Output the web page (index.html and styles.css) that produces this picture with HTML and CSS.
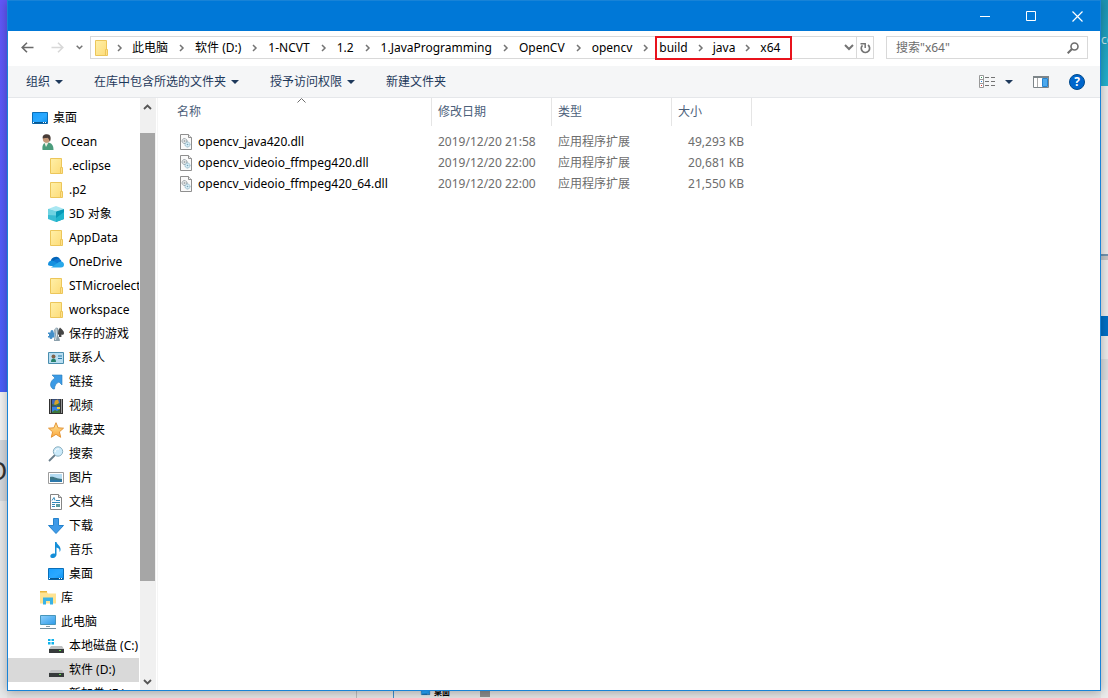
FILE: index.html
```
<!DOCTYPE html>
<html lang="zh-CN">
<head>
<meta charset="utf-8">
<title>x64</title>
<link rel="stylesheet" href="styles.css">
</head>
<body>
<svg class="defs" aria-hidden="true">
  <linearGradient id="g-folder" x1="0" y1="0" x2="1" y2="1"><stop offset="0" stop-color="#fff0a8"/><stop offset="1" stop-color="#fddc79"/></linearGradient>
  <linearGradient id="g-screen" x1="0" y1="0" x2="1" y2="1"><stop offset="0" stop-color="#1aa0ff"/><stop offset=".55" stop-color="#2ba9ff"/><stop offset="1" stop-color="#0a90f0"/></linearGradient>
  <linearGradient id="g-pc" x1="0" y1="0" x2="1" y2="1"><stop offset="0" stop-color="#8fd0fb"/><stop offset="1" stop-color="#2d9bea"/></linearGradient>
  <linearGradient id="g-star" x1="0" y1="0" x2="0" y2="1"><stop offset="0" stop-color="#ffe79a"/><stop offset="1" stop-color="#fba63c"/></linearGradient>
  <symbol id="i-folder" viewBox="0 0 16 16"><path d="M2.5.5h11v15h-11z" fill="url(#g-folder)" stroke="#ecc65a"/><path d="M12.500 9.500h2v6h-2z" fill="#ffe08a" stroke="#ecc65a"/></symbol>
  <symbol id="i-desktop" viewBox="0 0 16 16"><path d="M.5 2.500h15v11H.5z" fill="url(#g-screen)" stroke="#0b6fb8"/><path d="M1 12h14v1.500H1z" fill="#08578f"/><path d="M1 12h1v1H1zM11 12h1v1h-1zM13 12h1v1h-1z" fill="#fff"/></symbol>
  <symbol id="i-user" viewBox="0 0 16 16"><path d="M2.500 16c-.6-5 1-7.500 4.500-7.500 4.500 0 6.500 2.500 6.500 7.500z" fill="#4b9c7c"/><path d="M4.500 9l1.500 4 2.500-4.500z" fill="#f2eee3"/><circle cx="6.500" cy="5" r="3.700" fill="#c59878"/><path d="M2.800 4.500C2 1 5 0 7 .2c3.500 0 4.500 3.500 3 7.300C9 6.500 9 4.500 7.500 3.800c-1.500.4-3 .2-4.700.7z" fill="#493d38"/></symbol>
  <symbol id="i-cube" viewBox="0 0 16 16"><path d="M0 3l8-3 8 3-8 2.500z" fill="#a9e7f2"/><path d="M0 3l8 2.500V16l-8-3z" fill="#39bcd3"/><path d="M8 5.500L16 3v10l-8 3z" fill="#0799b7"/><path d="M0 3l8 2.500v4L0 9z" fill="#6fd3e2"/><path d="M8 12l8-6v7l-8 3z" fill="#20b6cd"/></symbol>
  <symbol id="i-cloud" viewBox="0 0 16 16"><path d="M3 9a5 5 0 0 1 9-4l-3 5z" fill="#0364b8"/><path d="M5 7.500C8 3.500 13 4 13.500 7.500L9 12z" fill="#0f78d4"/><path d="M0 10.500C0 7 4 5.500 6.500 7.500L14 12H3c-2 0-3-.8-3-1.500z" fill="#1490df"/><path d="M3 13.500l8-5.500c3-1.500 5 .5 5 2.500 0 1.700-1 3-3 3z" fill="#28a8ea"/></symbol>
  <symbol id="i-games" viewBox="0 0 16 16"><path d="M12 1.500l1 1c1 1 3 2.500 3 4.500 0 1.800-1.600 2.200-2.600 1.500V11h-2.400V9C9.500 8 9 7 9.500 5.500z" fill="#454545"/><path d="M6 15c-.3-2 1-4 .8-6L6 4l2-2.500 2 .5.500 2.500L9.800 9l2 4.500V15z" fill="#8ba0ac"/><path d="M8 2.500L8.500 9l-1 5" stroke="#dfe8ed" fill="none"/><path d="M0 6.500h2.500V5.500a1.500 1.500 0 0 1 3 0v1h1v5h-2a1.500 1.500 0 0 1-3 0H0V10h1V8H0z" fill="#428fc9"/></symbol>
  <symbol id="i-contact" viewBox="0 0 16 16"><path d="M.5 2.500h15v11H.5z" fill="#b9def2" stroke="#4a8eae"/><path d="M3 12c0-3 1-3.500 2.500-3.500S8 9 8 12z" fill="#25826b"/><circle cx="5.500" cy="6.500" r="2" fill="#80634b"/><path d="M10 6h4M10 8.500h4" stroke="#287ba7"/></symbol>
  <symbol id="i-link" viewBox="0 0 16 16"><path d="M4 1h10v10l-3-3c-3 1-4.500 4-4.500 7H5c-4-3-3-8 2-11z" fill="#3b9ae5" stroke="#287cbb" stroke-width=".6"/></symbol>
  <symbol id="i-video" viewBox="0 0 16 16"><path d="M1 1h14v15H1z" fill="#313131"/><path d="M4 1.500h8v6H4z" fill="#3d68bf"/><path d="M4 8.500h8V15H4z" fill="#3783e4"/><path d="M7 2.500l3-1 1 3-2 3-3-1z" fill="#d7a32a"/><path d="M4 6l3 1 5-2v2.500H4zM4 14l3-2 2 1 3-2v4H4z" fill="#3d783c"/><path d="M9 9h3v2H9z" fill="#f1cd36"/><path d="M2.500 1.500v14M13.500 1.500v14" stroke="#fff" stroke-dasharray="1 1"/></symbol>
  <symbol id="i-star" viewBox="0 0 16 16"><path d="M8 .7l2.100 5.100 5.400.4-4.100 3.600 1.300 5.500L8 12.300l-4.700 3 1.300-5.500L.5 6.200l5.400-.4z" fill="url(#g-star)" stroke="#e39537"/></symbol>
  <symbol id="i-search" viewBox="0 0 16 16"><path d="M1 15l6-6" stroke="#687d8b" stroke-width="1.800"/><circle cx="10" cy="5.500" r="4.700" fill="#cbeafa" stroke="#89aebf"/><path d="M7 6c.3-2 2-3.500 4-3" fill="none" stroke="#fff"/></symbol>
  <symbol id="i-picture" viewBox="0 0 16 16"><path d="M.5 2.500h15v11H.5z" fill="#fff" stroke="#9c9c9c"/><path d="M2 4h12v8H2z" fill="#b5dcf3"/><path d="M2 7c4-1 6 2 12 2v3H2z" fill="#3e7684"/><path d="M2 10c5-1 8 1 12 0v2H2z" fill="#2c78ab"/></symbol>
  <symbol id="i-document" viewBox="0 0 16 16"><path d="M2.500.5h8l3 3v12h-11z" fill="#fff" stroke="#858585"/><path d="M10.500.5v3h3" fill="#ddd" stroke="#858585"/><path d="M4 6.500l2-3 1 3M4 8.500h8M8 6.500h4M4 10.500h3M4 12.500h3" stroke="#3289ba" fill="none"/><path d="M8 10h4v3H8z" fill="#5b9b9e"/></symbol>
  <symbol id="i-download" viewBox="0 0 16 16"><path d="M5.500.5h5v7h5L8 15.500.5 7.500h5z" fill="#3f9ae8" stroke="#2582cc"/></symbol>
  <symbol id="i-music" viewBox="0 0 16 16"><path d="M7 0h1.500c.5 3 4.500 3.500 4 8-.2 1.500-1 2-1 2 .5-3-1-4-3-4.500V13c-.3 2-2.500 3.300-4.500 3C1.300 15.500 2 12 5 11.500c1-.2 1.500 0 2 .2z" fill="#148ed8"/></symbol>
  <symbol id="i-library" viewBox="0 0 16 16"><path d="M0 1.500h6.500l1.500 2h8v10H0z" fill="#ffe391"/><path d="M0 1h7v1.500H0z" fill="#e8b63e"/><path d="M3 14.500V7.500h10v7h-3V11H6v3.500z" fill="#3ab2e5"/></symbol>
  <symbol id="i-pc" viewBox="0 0 16 16"><path d="M.5 1.500h15v9H.5z" fill="url(#g-pc)" stroke="#4796bb"/><path d="M6 12.500h4" stroke="#8799a4"/><path d="M0 14.500h16" stroke="#748e9c"/></symbol>
  <symbol id="i-drive" viewBox="0 0 16 16"><path d="M3 8h11l2 3H1z" fill="#bfc1c2"/><path d="M1 11h15v4H1z" fill="#363a3b"/><path d="M11 12.500h2" stroke="#63df4b"/></symbol>
  <symbol id="i-sysdrive" viewBox="0 0 16 16"><use href="#i-drive"/><path d="M0 1h2.500v2H0zM3.500 1H6v2H3.500zM0 4h2.500v2.500H0zM3.500 4H6v2.500H3.500z" fill="#0db2ec"/></symbol>
  <symbol id="i-dll" viewBox="0 0 16 16"><path d="M2.500.5h8l3 3v12h-11z" fill="#fafafa" stroke="#8f8f8f"/><path d="M10.500.5v3h3" fill="#eee" stroke="#8f8f8f"/><circle cx="6.500" cy="7" r="2.500" fill="#e1e5e7" stroke="#7e898e" stroke-dasharray="1 .6"/><circle cx="9.500" cy="10.500" r="2.500" fill="#d8edf6" stroke="#7da9bc" stroke-dasharray="1 .6"/><circle cx="6.500" cy="7" r=".8" fill="#8b9295"/><circle cx="9.500" cy="10.500" r=".8" fill="#76a1b5"/></symbol>
  <symbol id="i-chev" viewBox="0 0 6 8"><path d="M1 1l3 3-3 3" fill="none" stroke="#747474" stroke-width="1.500"/></symbol>
  <symbol id="i-caret" viewBox="0 0 8 4"><path d="M0 0h8L4 4z" fill="#1e395b"/></symbol>
</svg>

<div class="desktop">
  <div class="backdrop" aria-hidden="true">
    <div class="strip left"><span class="purple"></span><span class="pale"></span><span class="grey">O</span></div>
    <div class="strip right"><span class="teal">co</span><span class="line"></span><span class="blue"></span><span class="shade"></span></div>
    <div class="strip bottom"><span class="seam"></span><span class="divider"></span><span class="mini"><svg><use href="#i-desktop"/></svg><b>桌面</b></span><span class="thumb-end"></span></div>
  </div>

  <div class="window">
    <header class="titlebar">
      <button aria-label="最小化"><svg width="10" height="11"><path d="M0 5.500h10" stroke="#fff"/></svg></button>
      <button aria-label="最大化"><svg width="11" height="11"><path d="M.5.5h9v9h-9z" stroke="#fff" fill="none"/></svg></button>
      <button aria-label="关闭"><svg width="11" height="11"><path d="M.5.5l10 10M10.500.5l-10 10" stroke="#fff" stroke-width="1.200"/></svg></button>
    </header>

    <div class="navrow">
      <button class="back" aria-label="后退"><svg width="13" height="11"><path d="M12.500 5.500H1M6 .7L1.200 5.500 6 10.300" fill="none" stroke="#6a6a6a" stroke-width="1.600"/></svg></button>
      <button class="forward" aria-label="前进"><svg width="13" height="11"><path d="M.5 5.500H12M7 .7l4.800 4.800L7 10.300" fill="none" stroke="#d8d8d8" stroke-width="1.600"/></svg></button>
      <button class="recent" aria-label="最近浏览的位置"><svg width="7" height="5"><path d="M.7.7l2.800 2.800L6.300.7" fill="none" stroke="#747474" stroke-width="1.500"/></svg></button>
      <nav class="address">
        <svg class="icon"><use href="#i-folder"/></svg>
        <svg class="chev first"><use href="#i-chev"/></svg>
        <a href="#">此电脑</a><svg class="chev"><use href="#i-chev"/></svg>
        <a href="#">软件 (D:)</a><svg class="chev"><use href="#i-chev"/></svg>
        <a href="#">1-NCVT</a><svg class="chev"><use href="#i-chev"/></svg>
        <a href="#">1.2</a><svg class="chev"><use href="#i-chev"/></svg>
        <a href="#">1.JavaProgramming</a><svg class="chev"><use href="#i-chev"/></svg>
        <a href="#">OpenCV</a><svg class="chev"><use href="#i-chev"/></svg>
        <a href="#">opencv</a><svg class="chev"><use href="#i-chev"/></svg>
        <span class="marked"><a href="#">build</a><svg class="chev"><use href="#i-chev"/></svg><a href="#">java</a><svg class="chev"><use href="#i-chev"/></svg><a href="#">x64</a></span>
        <button class="history" aria-label="以前的位置"><svg width="10" height="7"><path d="M1 1l4 4 4-4" fill="none" stroke="#747474" stroke-width="2"/></svg></button>
        <button class="refresh" aria-label="刷新"><svg width="11" height="12"><path d="M2.500 3.300A4.200 4.200 0 1 0 8 3" fill="none" stroke="#747474" stroke-width="1.700"/><path d="M.5 1.700h4.700V6" fill="none" stroke="#747474" stroke-width="1.500"/></svg></button>
      </nav>
      <div class="search">
        <input type="search" aria-label="搜索" placeholder='搜索"x64"'>
        <svg width="12" height="12"><circle cx="7.500" cy="4.500" r="3.500" fill="none" stroke="#6e6e6e" stroke-width="1.600"/><path d="M5 7L.7 11.300" stroke="#6e6e6e" stroke-width="2"/></svg>
      </div>
    </div>

    <div class="toolbar">
      <button>组织<svg class="caret"><use href="#i-caret"/></svg></button>
      <button>在库中包含所选的文件夹<svg class="caret"><use href="#i-caret"/></svg></button>
      <button>授予访问权限<svg class="caret"><use href="#i-caret"/></svg></button>
      <button>新建文件夹</button>
      <div class="views">
        <button aria-label="更改视图"><svg width="17" height="13"><path d="M.5.5h4v12h-4zM.5 4.500h4M.5 8.500h4" fill="#fff" stroke="#999"/><path d="M2 2h1v1H2z" fill="#2c9c58"/><path d="M2 6h1v1H2z" fill="#277fd4"/><path d="M2 10h1v1H2z" fill="#d93232"/><path d="M6 2.500h4M12 2.500h4M6 6.500h4M12 6.500h4M6 10.500h4M12 10.500h4" stroke="#747474"/></svg><svg class="caret"><use href="#i-caret"/></svg></button>
        <button aria-label="显示预览窗格"><svg width="16" height="12"><path d="M.5.500h15v11H.5z" fill="#fff" stroke="#7d8589"/><path d="M0 1h16" stroke="#7d8589" stroke-width="2"/><path d="M4.500 2v9" stroke="#aaa"/><path d="M9.500 2.500h5v8h-5z" fill="#4ca9ed" stroke="#2683cf"/></svg></button>
        <button aria-label="帮助" class="help">?</button>
      </div>
    </div>

    <div class="content">
      <aside class="tree">
        <ul>
          <li class="l1"><svg><use href="#i-desktop"/></svg>桌面</li>
          <li class="l2"><svg><use href="#i-user"/></svg>Ocean</li>
          <li><svg><use href="#i-folder"/></svg>.eclipse</li>
          <li><svg><use href="#i-folder"/></svg>.p2</li>
          <li><svg><use href="#i-cube"/></svg>3D 对象</li>
          <li><svg><use href="#i-folder"/></svg>AppData</li>
          <li><svg><use href="#i-cloud"/></svg>OneDrive</li>
          <li><svg><use href="#i-folder"/></svg>STMicroelectronics</li>
          <li><svg><use href="#i-folder"/></svg>workspace</li>
          <li><svg><use href="#i-games"/></svg>保存的游戏</li>
          <li><svg><use href="#i-contact"/></svg>联系人</li>
          <li><svg><use href="#i-link"/></svg>链接</li>
          <li><svg><use href="#i-video"/></svg>视频</li>
          <li><svg><use href="#i-star"/></svg>收藏夹</li>
          <li><svg><use href="#i-search"/></svg>搜索</li>
          <li><svg><use href="#i-picture"/></svg>图片</li>
          <li><svg><use href="#i-document"/></svg>文档</li>
          <li><svg><use href="#i-download"/></svg>下载</li>
          <li><svg><use href="#i-music"/></svg>音乐</li>
          <li><svg><use href="#i-desktop"/></svg>桌面</li>
          <li class="l2"><svg><use href="#i-library"/></svg>库</li>
          <li class="l2"><svg><use href="#i-pc"/></svg>此电脑</li>
          <li><svg><use href="#i-sysdrive"/></svg>本地磁盘 (C:)</li>
          <li class="selected"><svg><use href="#i-drive"/></svg>软件 (D:)</li>
          <li><svg><use href="#i-drive"/></svg>新加卷 (E:)</li>
        </ul>
      </aside>
      <div class="scrollbar">
        <button aria-label="向上滚动"><svg width="9" height="6"><path d="M1 5l3.500-3.500L8 5" fill="none" stroke="#555" stroke-width="1.800"/></svg></button>
        <div class="track"><div class="thumb"></div></div>
        <button aria-label="向下滚动"><svg width="9" height="6"><path d="M1 1l3.500 3.500L8 1" fill="none" stroke="#555" stroke-width="1.800"/></svg></button>
      </div>
      <main class="files">
        <table>
          <colgroup><col class="c-name"><col class="c-date"><col class="c-type"><col class="c-size"></colgroup>
          <thead><tr><th class="name">名称<svg class="sort" width="9" height="5"><path d="M.5 4.500l4-4 4 4" fill="none" stroke="#6d6d6d"/></svg></th><th>修改日期</th><th>类型</th><th>大小</th></tr></thead>
          <tbody>
            <tr><td class="name"><span><svg><use href="#i-dll"/></svg>opencv_java420.dll</span></td><td>2019/12/20 21:58</td><td>应用程序扩展</td><td class="size">49,293 KB</td></tr>
            <tr><td class="name"><span><svg><use href="#i-dll"/></svg>opencv_videoio_ffmpeg420.dll</span></td><td>2019/12/20 22:00</td><td>应用程序扩展</td><td class="size">20,681 KB</td></tr>
            <tr><td class="name"><span><svg><use href="#i-dll"/></svg>opencv_videoio_ffmpeg420_64.dll</span></td><td>2019/12/20 22:00</td><td>应用程序扩展</td><td class="size">21,550 KB</td></tr>
          </tbody>
        </table>
      </main>
    </div>
  </div>
</div>
</body>
</html>
```
FILE: styles.css
```
* { box-sizing: border-box; }

body {
  margin: 0;
  font: 12px/16px "Noto Sans", "Noto Sans CJK SC", sans-serif;
  color: #000;
}

button {
  display: flex;
  align-items: center;
  justify-content: center;
  padding: 0;
  border: 0;
  background: none;
  font: inherit;
  color: inherit;
}

svg { flex: none; }

.defs {
  position: absolute;
  width: 0;
  height: 0;
}

/* Desktop behind the window */
.desktop {
  position: relative;
  display: flex;
  height: 100vh;
  padding: 0 7px 7px;
  overflow: hidden;
  background: #e3e3e3;
}

.strip { position: absolute; overflow: hidden; }
.strip span { position: absolute; }
.left { top: 0; left: 0; bottom: 0; width: 7px; background: #e8e9ea; }
.right { top: 0; right: 0; bottom: 0; width: 7px; background: #ececec; }
.bottom { left: 7px; right: 7px; bottom: 0; height: 7px; background: #e4e4e4; }

.purple { top: 0; width: 7px; height: 392px; background: linear-gradient(#6258f8, #4a60fa); }
.pale { top: 392px; width: 7px; height: 48px; background: #f4f4f4; }
.grey { top: 440px; width: 7px; height: 61px; background: #d5d9de; font-size: 26px; line-height: 61px; color: #333; text-indent: -13px; }
.teal { top: 0; width: 7px; height: 86px; background: linear-gradient(#1d94b4, #24b2cf); line-height: 80px; color: #c5e8ef; }
.line { top: 254px; width: 7px; height: 6px; border-top: 2px solid #7294b0; background: #c6c6c6; }
.blue { top: 316px; width: 7px; height: 20px; background: #006fc6; }
.shade { top: 359px; width: 7px; height: 21px; background: #dcdddf; }
.seam { left: 349px; width: 1px; height: 7px; background: #bbb; }
.divider { left: 386px; width: 1px; height: 7px; background: #3e8dcc; }
.mini { left: 413px; bottom: 2px; display: flex; align-items: flex-end; gap: 3px; line-height: 12px; }
.mini svg { width: 11px; height: 9px; }
.mini b { font-size: 8px; line-height: 8px; }
.thumb-end { left: 473px; width: 10px; height: 6px; background: #8d8d8d; }

/* Window frame */
.window {
  position: relative;
  display: flex;
  flex: 1;
  flex-direction: column;
  min-width: 0;
  border: 1px solid #1883d7;
  border-top: 0;
  background: #fff;
  box-shadow: 0 1px 10px rgba(0, 0, 0, .3);
}

.titlebar {
  display: flex;
  justify-content: flex-end;
  height: 31px;
  border-top: 1px solid #1883d7;
  background: #0078d7;
}
.titlebar button { width: 46px; }

/* Navigation row */
.navrow {
  display: flex;
  align-items: center;
  height: 35px;
  padding: 0 12px 2px 0;
}
.back { width: 38px; }
.forward { width: 22px; }
.recent { width: 22px; }

.address {
  display: flex;
  flex: 1;
  align-items: center;
  height: 23px;
  min-width: 0;
  padding-left: 2px;
  border: 1px solid #d9d9d9;
  white-space: nowrap;
}
.address a { color: #000; text-decoration: none; }
.icon { width: 16px; height: 16px; }
.chev { width: 6px; height: 8px; margin: 0 10px 0 11px; }
.chev.first { margin: 0 9px 0 8px; }

.marked {
  position: relative;
  display: flex;
  align-items: center;
}
.marked .chev { margin: 0 9px 0 10px; }
.marked::after {
  content: "";
  position: absolute;
  inset: -4px -12px -4px -4px;
  border: 2px solid #e8131c;
}

.history { width: 15px; margin-left: auto; }
.refresh { width: 17px; height: 21px; border-left: 1px solid #d9d9d9; }

.search {
  display: flex;
  align-items: center;
  width: 202px;
  height: 23px;
  margin-left: 12px;
  padding: 0 8px 0 9px;
  border: 1px solid #d9d9d9;
}
.search input {
  flex: 1;
  min-width: 0;
  padding: 0;
  border: 0;
  outline: 0;
  background: none;
  font: inherit;
}
.search input::placeholder { color: #6d6d6d; }

/* Command bar */
.toolbar {
  display: flex;
  align-items: center;
  gap: 31px;
  height: 32px;
  padding: 0 15px 0 18px;
  border-bottom: 1px solid #e5e7ea;
  background: #f5f6f7;
  color: #1e395b;
}
.toolbar button { gap: 5px; }
.caret { width: 8px; height: 4px; }
.views {
  display: flex;
  align-items: center;
  gap: 20px;
  margin-left: auto;
}
.toolbar .views button:first-child { gap: 9px; }
.toolbar .help {
  width: 16px;
  height: 16px;
  border: 1px solid #004a8c;
  border-radius: 50%;
  background: #0066cc;
  color: #fff;
  font-weight: bold;
}

/* Folder tree */
.content {
  display: flex;
  flex: 1;
  min-height: 0;
}
.tree {
  width: 131px;
  overflow: hidden;
}
.tree ul {
  margin: 0;
  padding: 8px 0 0;
  list-style: none;
}
.tree li {
  display: flex;
  align-items: center;
  gap: 5px;
  height: 24px;
  padding-left: 40px;
  white-space: nowrap;
}
.tree .l1 { padding-left: 24px; }
.tree .l2 { padding-left: 32px; }
.tree svg { width: 16px; height: 16px; }
.tree .selected { background: #d9d9d9; }

.scrollbar {
  display: flex;
  flex-direction: column;
  width: 16px;
  margin-left: 1px;
  background: #f0f0f0;
}
.scrollbar button { width: 15px; height: 17px; }
.track {
  flex: 1;
  padding-top: 18px;
}
.thumb {
  width: 15px;
  height: 83%;
  background: #a6a6a6;
}

/* File list */
.files {
  flex: 1;
  min-width: 0;
  margin-left: 1px;
  border-left: 1px solid #f5f5f5;
}
table {
  width: 594px;
  table-layout: fixed;
  border-collapse: separate;
  border-spacing: 0;
}
.c-name { width: 274px; }
.c-date, .c-type { width: 120px; }
.c-size { width: 80px; }
th {
  position: relative;
  height: 28px;
  padding: 0 6px;
  border-right: 1px solid #e5e5e5;
  font-weight: normal;
  text-align: left;
  color: #4c607a;
}
th.name { padding-left: 19px; }
.sort { position: absolute; top: 0; left: calc(50% + 2px); }
tbody::before {
  content: "";
  display: block;
  height: 5px;
}
td {
  height: 21px;
  padding: 0 6px;
  color: #6d6d6d;
  white-space: nowrap;
}
td.name { padding-left: 20px; color: #000; }
td.name span { display: flex; align-items: center; gap: 4px; }
td svg { width: 16px; height: 16px; }
td.size { padding-right: 8px; text-align: right; }
```
